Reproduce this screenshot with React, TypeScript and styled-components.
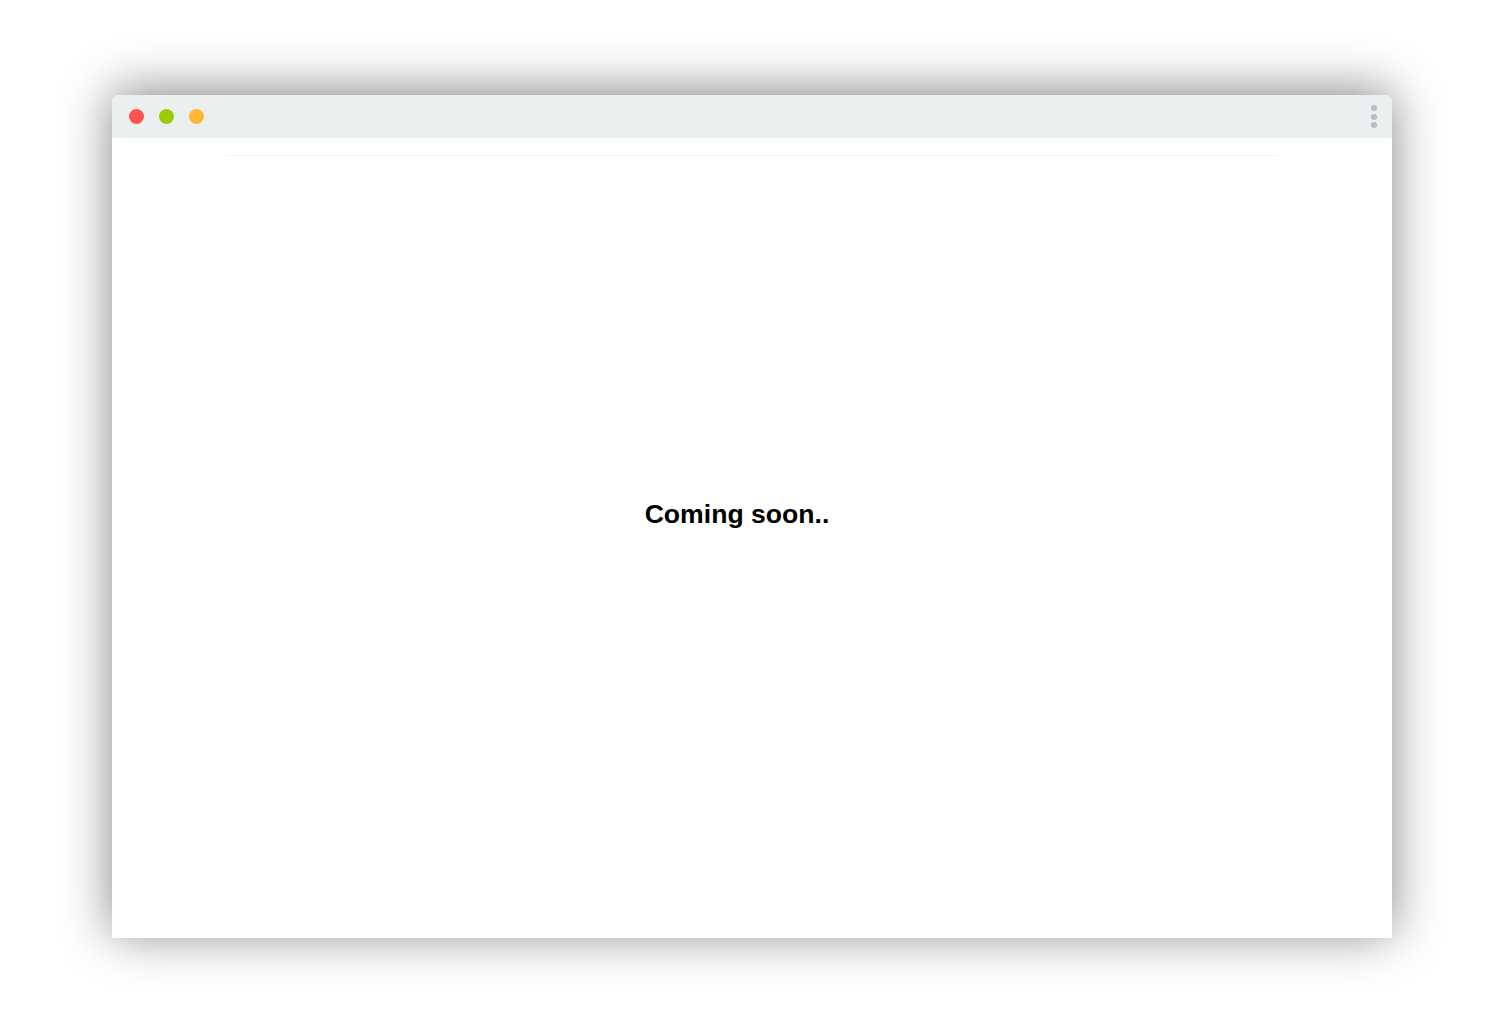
import React from "react";
import styled, { createGlobalStyle } from "styled-components";

const Global = createGlobalStyle`
  html, body { margin: 0; padding: 0; background: #ffffff; }
  body { font-family: "Liberation Sans", Arial, sans-serif; }
`;

const Page = styled.div`
  width: 1504px;
  height: 1018px;
  padding: 95px 0 0 112px;
  box-sizing: border-box;
`;

const Window = styled.div`
  width: 1280px;
  height: 843px;
  background: #ffffff;
  border-radius: 7px 7px 0 0;
  box-shadow: 0 -4px 50px rgba(0, 0, 0, 0.48);
  display: flex;
  flex-direction: column;
  overflow: hidden;
`;

const TitleBar = styled.div`
  height: 43px;
  flex: none;
  background: #eceff0;
  display: flex;
  align-items: center;
  padding: 0 17px;
  gap: 15px;
`;

const Light = styled.span<{ $color: string }>`
  width: 15px;
  height: 15px;
  border-radius: 50%;
  background: ${(p) => p.$color};
`;

const Menu = styled.div`
  margin-left: auto;
  margin-right: -2px;
  display: flex;
  flex-direction: column;
  gap: 2.5px;
`;

const MenuDot = styled.span`
  width: 6px;
  height: 6px;
  border-radius: 50%;
  background: #b9bdc0;
`;

const Body = styled.div`
  flex: 1;
  display: flex;
  flex-direction: column;
  padding: 17px 113px 0;
`;

const Divider = styled.div`
  height: 1px;
  background: #f4f4f4;
`;

const Content = styled.div`
  flex: 1;
  display: flex;
  align-items: center;
  justify-content: center;
  padding: 0 30px 66px 0;
`;

const Heading = styled.h1`
  margin: 0;
  font-family: "Liberation Sans", Arial, sans-serif;
  font-weight: 700;
  font-size: 26.6px;
  color: #000000;
`;

export default function App() {
  return (
    <>
      <Global />
      <Page>
        <Window>
          <TitleBar>
            <Light $color="#fe5252" />
            <Light $color="#99cc00" />
            <Light $color="#ffb835" />
            <Menu>
              <MenuDot />
              <MenuDot />
              <MenuDot />
            </Menu>
          </TitleBar>
          <Body>
            <Divider />
            <Content>
              <Heading>Coming soon..</Heading>
            </Content>
          </Body>
        </Window>
      </Page>
    </>
  );
}
